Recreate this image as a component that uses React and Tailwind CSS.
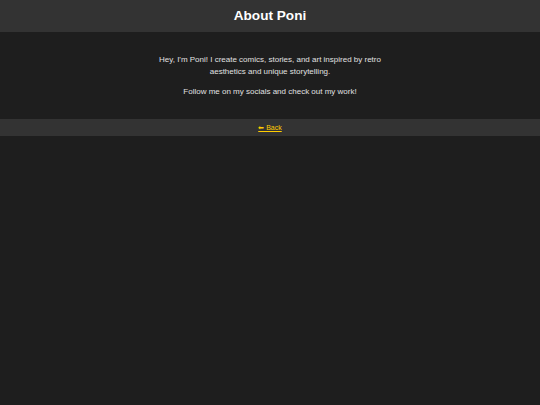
import React from "react";

const App = () => {
  return (
    <div
      className="min-h-screen bg-[#1e1e1e] text-[#e0e0e0]"
      style={{ fontFamily: '"Liberation Sans", Arial, sans-serif' }}
    >
      {/* Header */}
      <header className="bg-[#333333] h-[32px] flex items-center justify-center">
        <h1 className="text-[13.6px] font-bold text-white">About Poni</h1>
      </header>

      {/* Main */}
      <main className="pt-[22px] pb-[21px] flex flex-col items-center">
        <p className="max-w-[240px] text-center text-[8px] leading-[12px]">
          Hey, I'm Poni! I create comics, stories, and art inspired by retro
          aesthetics and unique storytelling.
        </p>
        <p className="mt-[8px] max-w-[240px] text-center text-[8px] leading-[12px]">
          Follow me on my socials and check out my work!
        </p>
      </main>

      {/* Footer */}
      <footer className="bg-[#333333] h-[17px] pt-[2px] flex items-center justify-center">
        <a href="#" className="text-[7px] text-[#ffcc00] underline">
          ⬅ Back
        </a>
      </footer>
    </div>
  );
};

export default App;
